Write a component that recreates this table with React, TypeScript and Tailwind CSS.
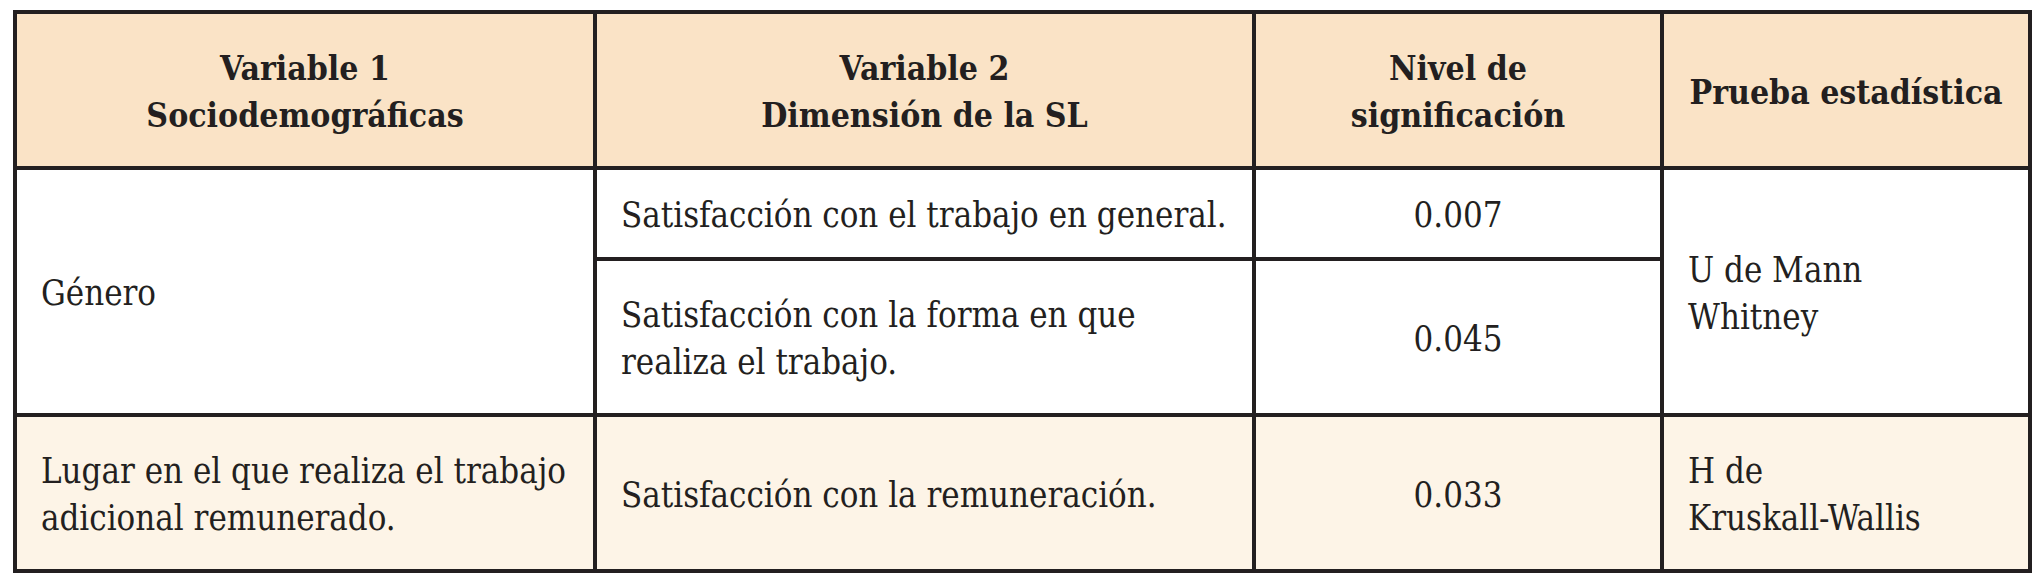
const headers = [
  ["Variable 1", "Sociodemográficas"],
  ["Variable 2", "Dimensión de la SL"],
  ["Nivel de", "significación"],
  ["Prueba estadística"],
];

export default function App() {
  return (
    <div className="min-h-screen bg-white pl-[13px] pt-[10px]">
      <div className="grid w-fit grid-cols-[576px_655px_404px_364px] grid-rows-[152px_87px_152px_152px] gap-[4px] bg-[#231f20] p-[4px] font-['DejaVu_Serif_Condensed','DejaVu_Serif',serif] font-stretch-condensed text-[34.5px] leading-[47px] whitespace-nowrap text-[#231f20]">
        {/* Header */}
        {headers.map((lines, i) => (
          <div
            key={i}
            className="flex flex-col items-center justify-center bg-[#fae3c6] px-6 pt-1 text-center text-[33.5px] font-bold"
          >
            {lines.map((l) => (
              <span key={l}>{l}</span>
            ))}
          </div>
        ))}

        {/* Género */}
        <div className="row-span-2 flex items-center bg-white px-6 pt-1">Género</div>
        <div className="flex items-center bg-white px-6 pt-1">Satisfacción con el trabajo en general.</div>
        <div className="flex items-center justify-center bg-white px-6 pt-1">0.007</div>
        <div className="row-span-2 flex items-center bg-white px-6 pt-1">
          <span>
            U de Mann
            <br />
            Whitney
          </span>
        </div>
        <div className="flex items-center bg-white px-6 pt-1">
          <span>
            Satisfacción con la forma en que
            <br />
            realiza el trabajo.
          </span>
        </div>
        <div className="flex items-center justify-center bg-white px-6 pt-1">0.045</div>

        {/* Lugar */}
        <div className="flex items-center bg-[#fdf4e7] px-6 pt-1">
          <span>
            Lugar en el que realiza el trabajo
            <br />
            adicional remunerado.
          </span>
        </div>
        <div className="flex items-center bg-[#fdf4e7] px-6 pt-1">Satisfacción con la remuneración.</div>
        <div className="flex items-center justify-center bg-[#fdf4e7] px-6 pt-1">0.033</div>
        <div className="flex items-center bg-[#fdf4e7] px-6 pt-1">
          <span>
            H de
            <br />
            Kruskall-Wallis
          </span>
        </div>
      </div>
    </div>
  );
}
